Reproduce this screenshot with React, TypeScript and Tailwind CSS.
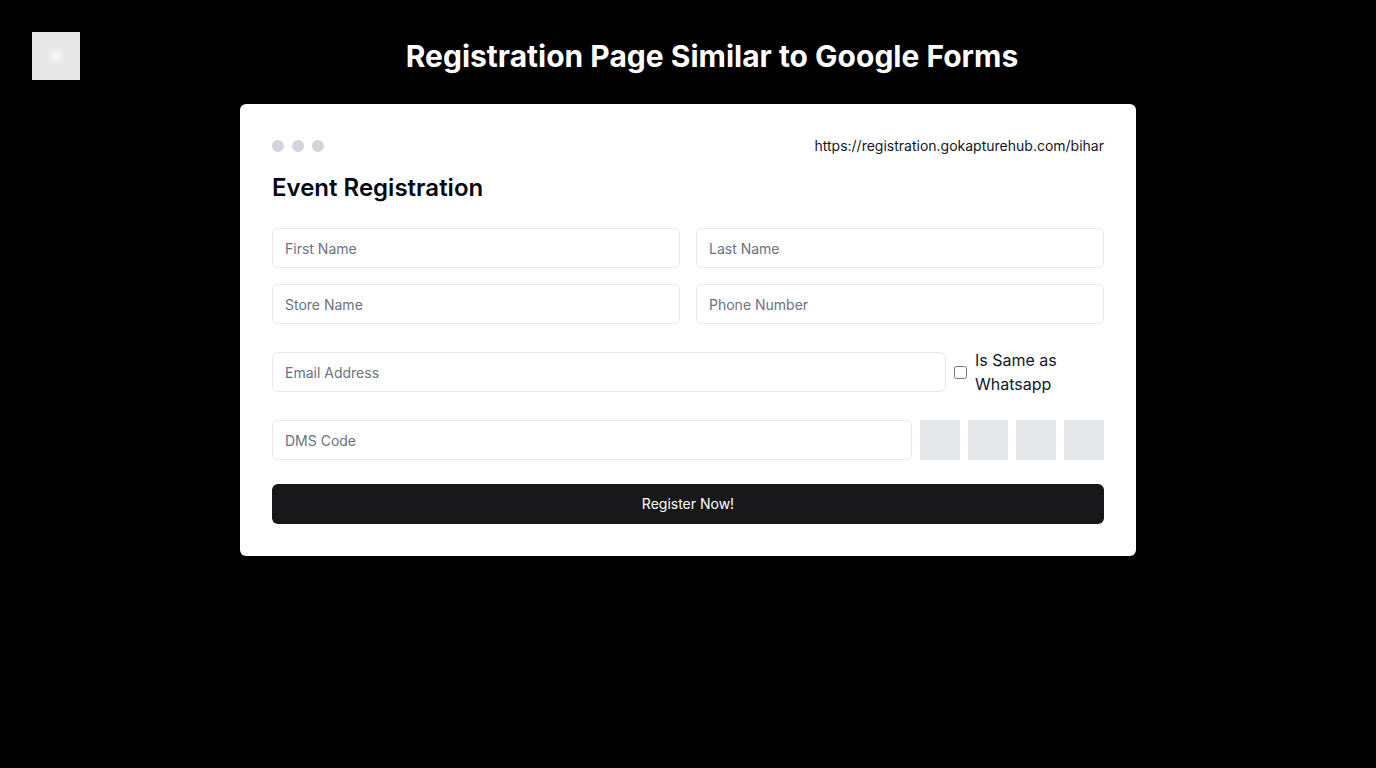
import React from 'react';

const inputCls =
  'h-10 w-full rounded-md border border-gray-200 bg-white px-3 text-sm text-gray-900 placeholder:text-gray-500 outline-none';

export default function App() {
  return (
    <div className="min-h-screen bg-black font-['Inter',sans-serif] px-8 pt-8">
      <div className="flex items-center">
        <div className="h-12 w-12 bg-[radial-gradient(circle,#f7f7f7_0%,#e8e8e8_30%,#e8e8e8_100%)]"></div>
        <h1 className="flex-1 text-center text-3xl font-bold text-white">
          Registration Page Similar to Google Forms
        </h1>
      </div>

      <div className="mx-auto mt-6 w-[896px] rounded-md bg-white p-8">
        <div className="flex items-center justify-between">
          <div className="flex gap-2">
            <div className="h-3 w-3 rounded-full bg-gray-300"></div>
            <div className="h-3 w-3 rounded-full bg-gray-300"></div>
            <div className="h-3 w-3 rounded-full bg-gray-300"></div>
          </div>
          <span className="text-sm text-gray-900">https://registration.gokapturehub.com/bihar</span>
        </div>

        <h2 className="mt-4 text-2xl font-semibold text-gray-950">Event Registration</h2>

        <form className="mt-6 flex flex-col gap-4" onSubmit={(e) => e.preventDefault()}>
          <div className="grid grid-cols-2 gap-4">
            <input className={inputCls} placeholder="First Name" />
            <input className={inputCls} placeholder="Last Name" />
          </div>
          <div className="grid grid-cols-2 gap-4">
            <input className={inputCls} placeholder="Store Name" />
            <input className={inputCls} placeholder="Phone Number" />
          </div>

          {/* email + whatsapp toggle */}
          <div className="my-2 flex items-center">
            <input className={inputCls} placeholder="Email Address" />
            <label className="ml-2 flex w-[150px] shrink-0 items-center gap-2 text-base text-gray-900">
              <input type="checkbox" className="h-[13px] w-[13px] shrink-0" />
              <span className="leading-6">Is Same as Whatsapp</span>
            </label>
          </div>

          <div className="flex items-center gap-2">
            <input className={inputCls} placeholder="DMS Code" />
            <div className="h-10 w-10 shrink-0 bg-gray-200"></div>
            <div className="h-10 w-10 shrink-0 bg-gray-200"></div>
            <div className="h-10 w-10 shrink-0 bg-gray-200"></div>
            <div className="h-10 w-10 shrink-0 bg-gray-200"></div>
          </div>

          <button
            type="submit"
            className="mt-2 h-10 w-full rounded-md bg-[#18181b] text-sm font-normal text-white"
          >
            Register Now!
          </button>
        </form>
      </div>
    </div>
  );
}
